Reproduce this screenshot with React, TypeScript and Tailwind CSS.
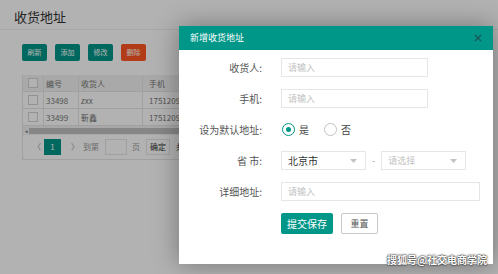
const font = "font-['Noto_Sans_CJK_SC','Noto_Sans',sans-serif]";

const Caret = () => (
  <svg width="7" height="4" viewBox="0 0 7 4" className="shrink-0">
    <path d="M0 0h7L3.5 4z" fill="#c2c2c2" />
  </svg>
);

const Radio = ({ checked, label }: { checked?: boolean; label: string }) => (
  <div className="flex items-center gap-[4px]">
    <span
      className={`flex h-[13px] w-[13px] items-center justify-center rounded-full border ${
        checked ? "border-[#009688]" : "border-[#c2c2c2]"
      }`}
    >
      {checked && <span className="h-[5px] w-[5px] rounded-full bg-[#009688]" />}
    </span>
    <span className="text-[10px] text-[#444]">{label}</span>
  </div>
);

const Page = () => (
  <div className="h-full w-full bg-white">
    <div className="flex h-[30px] items-end border-b border-[#f0f0f0] pb-[3px] pl-[14px] text-[13px] text-[#333]">
      收货地址
    </div>
    <div className="pl-[22px] pt-[14px]">
      <div className="flex gap-[8px]">
        {["刷新", "添加", "修改"].map((t) => (
          <div
            key={t}
            className="flex h-[17px] w-[25px] items-center justify-center rounded-[2px] bg-[#009688] text-[7px] text-white"
          >
            {t}
          </div>
        ))}
        <div className="flex h-[17px] w-[25px] items-center justify-center rounded-[2px] bg-[#ff5722] text-[7px] text-white">
          删除
        </div>
      </div>

      <div className="mt-[14px] w-[470px] border-l border-[#e6e6e6] text-[8px] text-[#777]">
        <div className="flex h-[17px] items-center border-b border-[#e6e6e6] bg-[#f2f2f2]">
          <div className="flex h-full w-[21px] items-center justify-center border-r border-[#e6e6e6]">
            <span className="h-[10px] w-[10px] border border-[#d2d2d2] bg-white" />
          </div>
          <div className="w-[35px] border-r border-[#e6e6e6] pl-[2px] leading-[17px]">编号</div>
          <div className="w-[64px] border-r border-[#e6e6e6] pl-[2px] leading-[17px]">收货人</div>
          <div className="pl-[6px] leading-[17px]">手机</div>
        </div>
        {[
          ["33498", "zxx"],
          ["33499", "靳鑫"],
        ].map(([id, name]) => (
          <div key={id} className="flex h-[17px] items-center border-b border-[#e6e6e6]">
            <div className="flex h-full w-[21px] items-center justify-center border-r border-[#e6e6e6]">
              <span className="h-[10px] w-[10px] border border-[#d2d2d2] bg-white" />
            </div>
            <div className="w-[35px] border-r border-[#e6e6e6] pl-[2px] leading-[17px]">{id}</div>
            <div className="w-[64px] border-r border-[#e6e6e6] pl-[2px] leading-[17px]">{name}</div>
            <div className="pl-[6px] leading-[17px]">17512094</div>
          </div>
        ))}
        <div className="flex h-[9px] items-center bg-[#f1f1f1]">
          <span className="w-[6px] text-center text-[5px] text-[#666]">◂</span>
          <div className="h-[6px] flex-1 bg-[#c1c1c1]" />
        </div>
        <div className="flex h-[25px] items-center border-b border-[#e6e6e6] pl-[10px] text-[8px] text-[#999]">
          <span className="w-[11px]">〈</span>
          <span className="flex h-[16px] w-[17px] items-center justify-center bg-[#009688] text-white">1</span>
          <span className="ml-[10px] w-[12px]">〉</span>
          <span>到第</span>
          <span className="ml-[6px] h-[16px] w-[22px] border border-[#e6e6e6] bg-white" />
          <span className="ml-[5px]">页</span>
          <span className="ml-[6px] flex h-[16px] w-[24px] items-center justify-center border border-[#e6e6e6] text-[#333]">
            确定
          </span>
          <span className="ml-[6px] text-[#333]">共</span>
        </div>
      </div>
    </div>
  </div>
);

const Field = ({ label, children }: { label: string; children: React.ReactNode }) => (
  <div className="flex h-[19px] items-center">
    <div className="w-[84px] pr-[1px] text-right text-[10px] text-[#555]">{label}</div>
    <div className="ml-[18px] flex items-center">{children}</div>
  </div>
);

const Input = ({ w }: { w: string }) => (
  <div className={`flex h-[19px] ${w} items-center border border-[#e6e6e6] pl-[6px] text-[9px] text-[#c2c2c2]`}>
    请输入
  </div>
);

export default function App() {
  return (
    <div className={`relative h-[274px] w-[498px] overflow-hidden ${font}`}>
      <Page />
      <div className="absolute inset-0 bg-black/30" />

      <div className="absolute left-[179px] top-[26px] h-[238px] w-[314px] bg-white shadow-[0_0_24px_rgba(0,0,0,0.35)]">
        <div className="flex h-[24px] items-center justify-between bg-[#009688] px-[11px] text-[9px] text-white">
          <span>新增收货地址</span>
          <svg width="8" height="8" viewBox="0 0 8 8">
            <path d="M1 1l6 6M7 1L1 7" stroke="#17615a" strokeWidth="1.6" />
          </svg>
        </div>
        <div className="flex flex-col gap-[12px] pt-[8px]">
          <Field label="收货人:">
            <Input w="w-[147px]" />
          </Field>
          <Field label="手机:">
            <Input w="w-[147px]" />
          </Field>
          <Field label="设为默认地址:">
            <div className="flex gap-[15px] pl-[1px]">
              <Radio checked label="是" />
              <Radio label="否" />
            </div>
          </Field>
          <Field label="省 市:">
            <div className="flex h-[19px] w-[85px] items-center justify-between border border-[#e6e6e6] pl-[6px] pr-[8px] text-[10px] text-[#333]">
              北京市
              <Caret />
            </div>
            <span className="mx-[6px] text-[9px] text-[#999]">-</span>
            <div className="flex h-[19px] w-[85px] items-center justify-between border border-[#e6e6e6] pl-[6px] pr-[8px] text-[9px] text-[#c2c2c2]">
              请选择
              <Caret />
            </div>
          </Field>
          <Field label="详细地址:">
            <Input w="w-[199px]" />
          </Field>
          <div className="flex gap-[8px] pl-[102px]">
            <div className="flex h-[21px] w-[52px] items-center justify-center rounded-[2px] bg-[#009688] text-[10px] text-white">
              提交保存
            </div>
            <div className="flex h-[21px] w-[37px] items-center justify-center rounded-[2px] border border-[#c9c9c9] text-[9px] text-[#555]">
              重置
            </div>
          </div>
        </div>
      </div>

      <div className="absolute right-[11px] top-[252px] text-[10px] font-bold text-white [text-shadow:0_0_2px_#222,0_0_2px_#222]">
        搜狐号@社交电商学院
      </div>
    </div>
  );
}
